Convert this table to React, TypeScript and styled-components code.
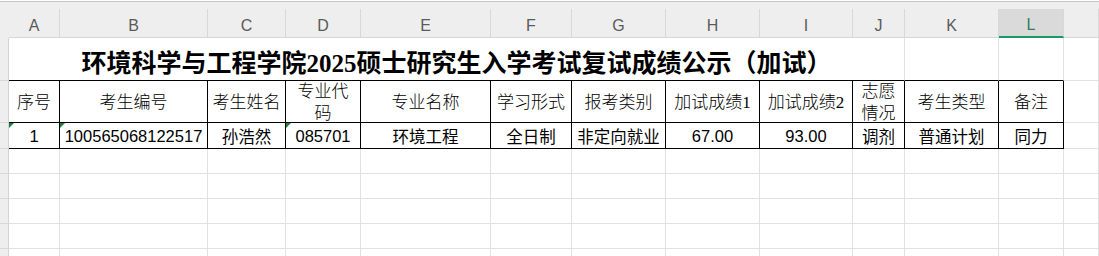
import styled, { createGlobalStyle, css } from "styled-components";

const GlobalStyle = createGlobalStyle`
  html, body {
    margin: 0;
    padding: 0;
    background: #ffffff;
    overflow: hidden;
  }
`;

const columns = [
  { key: "A", width: 51 },
  { key: "B", width: 148 },
  { key: "C", width: 78 },
  { key: "D", width: 75 },
  { key: "E", width: 130 },
  { key: "F", width: 81 },
  { key: "G", width: 94 },
  { key: "H", width: 94 },
  { key: "I", width: 93 },
  { key: "J", width: 52 },
  { key: "K", width: 94 },
  { key: "L", width: 65 },
];

const selectedColumn = "L";

const headers: string[][] = [
  ["序号"],
  ["考生编号"],
  ["考生姓名"],
  ["专业代", "码"],
  ["专业名称"],
  ["学习形式"],
  ["报考类别"],
  ["加试成绩1"],
  ["加试成绩2"],
  ["志愿", "情况"],
  ["考生类型"],
  ["备注"],
];

// cells stored as text get the little green marker
const record = [
  { value: "1", flag: true },
  { value: "100565068122517", flag: true },
  { value: "孙浩然" },
  { value: "085701", flag: true },
  { value: "环境工程" },
  { value: "全日制" },
  { value: "非定向就业" },
  { value: "67.00" },
  { value: "93.00" },
  { value: "调剂" },
  { value: "普通计划" },
  { value: "同力" },
];

const emptyRows = 5;

const Window = styled.div`
  width: 1099px;
  height: 256px;
  overflow: hidden;
  background: #ffffff;
`;

const TopStrip = styled.div`
  margin-top: 1px;
  height: 7px;
  border-top: 1px solid #c6c6c6;
  background: #eeeeee;
`;

const Sheet = styled.div`
  display: grid;
  grid-template-columns: 9px ${columns.map((c) => `${c.width}px`).join(" ")} 1fr;
  grid-template-rows: 29px 43px 42px 26px repeat(${emptyRows}, 25px);
`;

const Corner = styled.div`
  background: #eeeeee;
`;

const ColHead = styled.div<{ $selected?: boolean }>`
  box-sizing: border-box;
  display: flex;
  align-items: center;
  justify-content: center;
  padding-top: 5px;
  background: ${(p) => (p.$selected ? "#dadada" : "#eeeeee")};
  border-right: 1px solid #d8d8d8;
  border-bottom: ${(p) => (p.$selected ? "2px solid #1a9a6a" : "1px solid #d6d6d6")};
  font-family: "Liberation Sans", Arial, sans-serif;
  font-size: 16px;
  color: ${(p) => (p.$selected ? "#2f7d5c" : "#5a5a5a")};
`;

const RowHead = styled.div`
  box-sizing: border-box;
  background: #eeeeee;
  border-right: 1px solid #d4d4d4;
  border-bottom: 1px solid #d8d8d8;
`;

const Cell = styled.div<{ $ruled?: boolean }>`
  box-sizing: border-box;
  border-right: 1px solid #e1e1e1;
  border-bottom: 1px solid ${(p) => (p.$ruled ? "#000000" : "#e1e1e1")};
`;

const TitleCell = styled.div`
  box-sizing: border-box;
  grid-column: span 10;
  display: flex;
  align-items: center;
  justify-content: center;
  padding-top: 3px;
  border-right: 1px solid #e1e1e1;
  border-bottom: 1px solid #000000;
  font-family: "Liberation Serif", "Noto Sans CJK SC", serif;
  font-size: 25px;
  font-weight: 700;
  color: #000000;
  white-space: nowrap;
`;

const boxed = css`
  box-sizing: border-box;
  position: relative;
  display: flex;
  flex-direction: column;
  align-items: center;
  justify-content: center;
  text-align: center;
  border-right: 1px solid #000000;
  border-bottom: 1px solid #000000;
  color: #000000;
  white-space: nowrap;
`;

const LabelCell = styled.div`
  ${boxed};
  padding-top: 2px;
  font-family: "Liberation Serif", "Noto Sans CJK SC", serif;
  font-size: 17px;
  font-weight: 300;
  line-height: 22px;
`;

const DataCell = styled.div<{ $flag?: boolean }>`
  ${boxed};
  padding-top: 1px;
  font-family: "Liberation Sans", "Noto Sans CJK SC", sans-serif;
  font-size: 16.5px;

  ${(p) =>
    p.$flag &&
    css`
      &::before {
        content: "";
        position: absolute;
        top: 0;
        left: 0;
        border-top: 5px solid #1f7d3b;
        border-right: 5px solid transparent;
      }
    `}
`;

export default function App() {
  return (
    <Window>
      <GlobalStyle />
      <TopStrip />
      <Sheet>
        <Corner />
        {columns.map((c) => (
          <ColHead key={c.key} $selected={c.key === selectedColumn}>
            {c.key}
          </ColHead>
        ))}
        <ColHead />

        <RowHead />
        <TitleCell>环境科学与工程学院2025硕士研究生入学考试复试成绩公示（加试）</TitleCell>
        <Cell $ruled />
        <Cell $ruled />
        <Cell />

        <RowHead />
        {headers.map((lines, i) => (
          <LabelCell key={i}>
            {lines.map((line) => (
              <span key={line}>{line}</span>
            ))}
          </LabelCell>
        ))}
        <Cell />

        <RowHead />
        {record.map((item, i) => (
          <DataCell key={i} $flag={item.flag}>
            {item.value}
          </DataCell>
        ))}
        <Cell />

        {Array.from({ length: emptyRows }).map((_, r) => [
          <RowHead key={`h${r}`} />,
          ...columns.map((c) => <Cell key={`${r}${c.key}`} />),
          <Cell key={`${r}M`} />,
        ])}
      </Sheet>
    </Window>
  );
}
